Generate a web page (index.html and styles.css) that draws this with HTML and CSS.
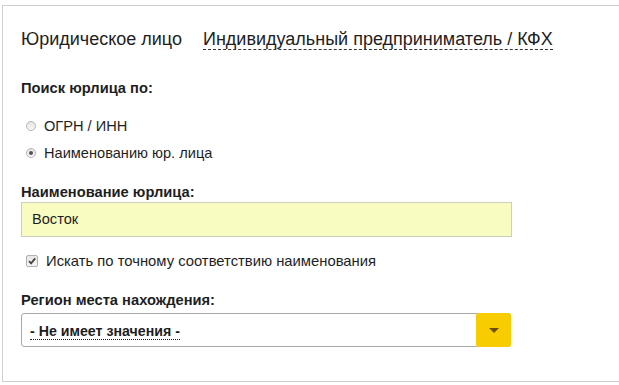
FILE: index.html
```html
<!DOCTYPE html>
<html lang="ru">
<head>
<meta charset="utf-8">
<link rel="stylesheet" href="styles.css">
</head>
<body>
<div class="panel">
  <div class="tabs">
    <span class="tab active">Юридическое лицо</span>
    <span class="tab link">Индивидуальный предприниматель / КФХ</span>
  </div>

  <div class="label first">Поиск юрлица по:</div>
  <div class="radios">
    <label class="radio"><span class="rb"></span>ОГРН / ИНН</label>
    <label class="radio"><span class="rb on"></span>Наименованию юр. лица</label>
  </div>

  <div class="label name">Наименование юрлица:</div>
  <div class="input">Восток</div>

  <label class="check"><span class="cb"><svg viewBox="0 0 12 12" width="12" height="12"><path d="M3 6.2 L5.1 8.4 L9.2 3.4" fill="none" stroke="#444" stroke-width="1.8"/></svg></span>Искать по точному соответствию наименования</label>

  <div class="label region">Регион места нахождения:</div>
  <div class="select">
    <span class="value">- Не имеет значения -</span>
    <span class="btn"><span class="arrow"></span></span>
  </div>
</div>
</body>
</html>
```

FILE: styles.css
```css
html, body {
  margin: 0;
  padding: 0;
  background: #fff;
}
body {
  font-family: "Liberation Sans", Arial, sans-serif;
  color: #1e1e1e;
  overflow: hidden;
}
.panel {
  margin: 5px 0 0 2px;
  width: 640px;
  height: 377px;
  box-sizing: border-box;
  border: 1px solid #cfcfcf;
  border-right: none;
  padding: 24px 0 0 18px;
}
.tabs {
  display: flex;
  gap: 21px;
  height: 20px;
  font-size: 18px;
  line-height: 19px;
}
.tab.link {
  border-bottom: 1px dashed #333;
  height: 19px;
}
.label {
  font-size: 14.7px;
  font-weight: bold;
  line-height: 17px;
}
.label.first {
  margin-top: 30px;
}
.label.name {
  margin-top: 23px;
}
.label.region {
  margin-top: 23px;
}
.radios {
  display: flex;
  flex-direction: column;
  gap: 11px;
  margin-top: 21px;
  padding-left: 5px;
}
.radio {
  display: flex;
  align-items: center;
  gap: 8px;
  font-size: 14.6px;
  line-height: 16px;
}
.rb {
  width: 10px;
  height: 10px;
  border-radius: 50%;
  border: 1px solid #b5b5b5;
  background: linear-gradient(#e4e4e4, #f8f8f8);
  box-sizing: border-box;
  position: relative;
}
.rb.on::after {
  content: "";
  position: absolute;
  left: 2px;
  top: 2px;
  width: 4px;
  height: 4px;
  border-radius: 50%;
  background: #555;
}
.input {
  margin-top: 1px;
  width: 491px;
  height: 35px;
  box-sizing: border-box;
  border: 1px solid #cdcdc0;
  background: #f9fcc0;
  font-size: 14.6px;
  line-height: 33px;
  padding-left: 10px;
}
.check {
  display: flex;
  align-items: center;
  gap: 8px;
  margin-top: 16px;
  padding-left: 5px;
  font-size: 14.8px;
  line-height: 16px;
}
.cb {
  width: 12px;
  height: 12px;
  box-sizing: border-box;
  border: 1px solid #b0b0b0;
  border-radius: 2px;
  background: linear-gradient(#e6e6e6, #f6f6f6);
  display: flex;
}
.cb svg {
  margin: -1px;
}
.select {
  margin-top: 4px;
  width: 490px;
  height: 34px;
  box-sizing: border-box;
  border: 1px solid #a9a9a9;
  border-radius: 3px;
  display: flex;
  align-items: center;
  justify-content: space-between;
}
.value {
  margin-left: 8px;
  font-size: 14.2px;
  font-weight: bold;
  line-height: 16px;
  border-bottom: 1px dotted #222;
  margin-top: 2px;
}
.btn {
  width: 35px;
  height: 34px;
  margin: -1px -1px -1px 0;
  background: #f7cc00;
  border-radius: 3px;
  display: flex;
  align-items: center;
  justify-content: center;
}
.arrow {
  width: 0;
  height: 0;
  border-left: 5px solid transparent;
  border-right: 5px solid transparent;
  border-top: 5px solid #6b4f06;
}
```
